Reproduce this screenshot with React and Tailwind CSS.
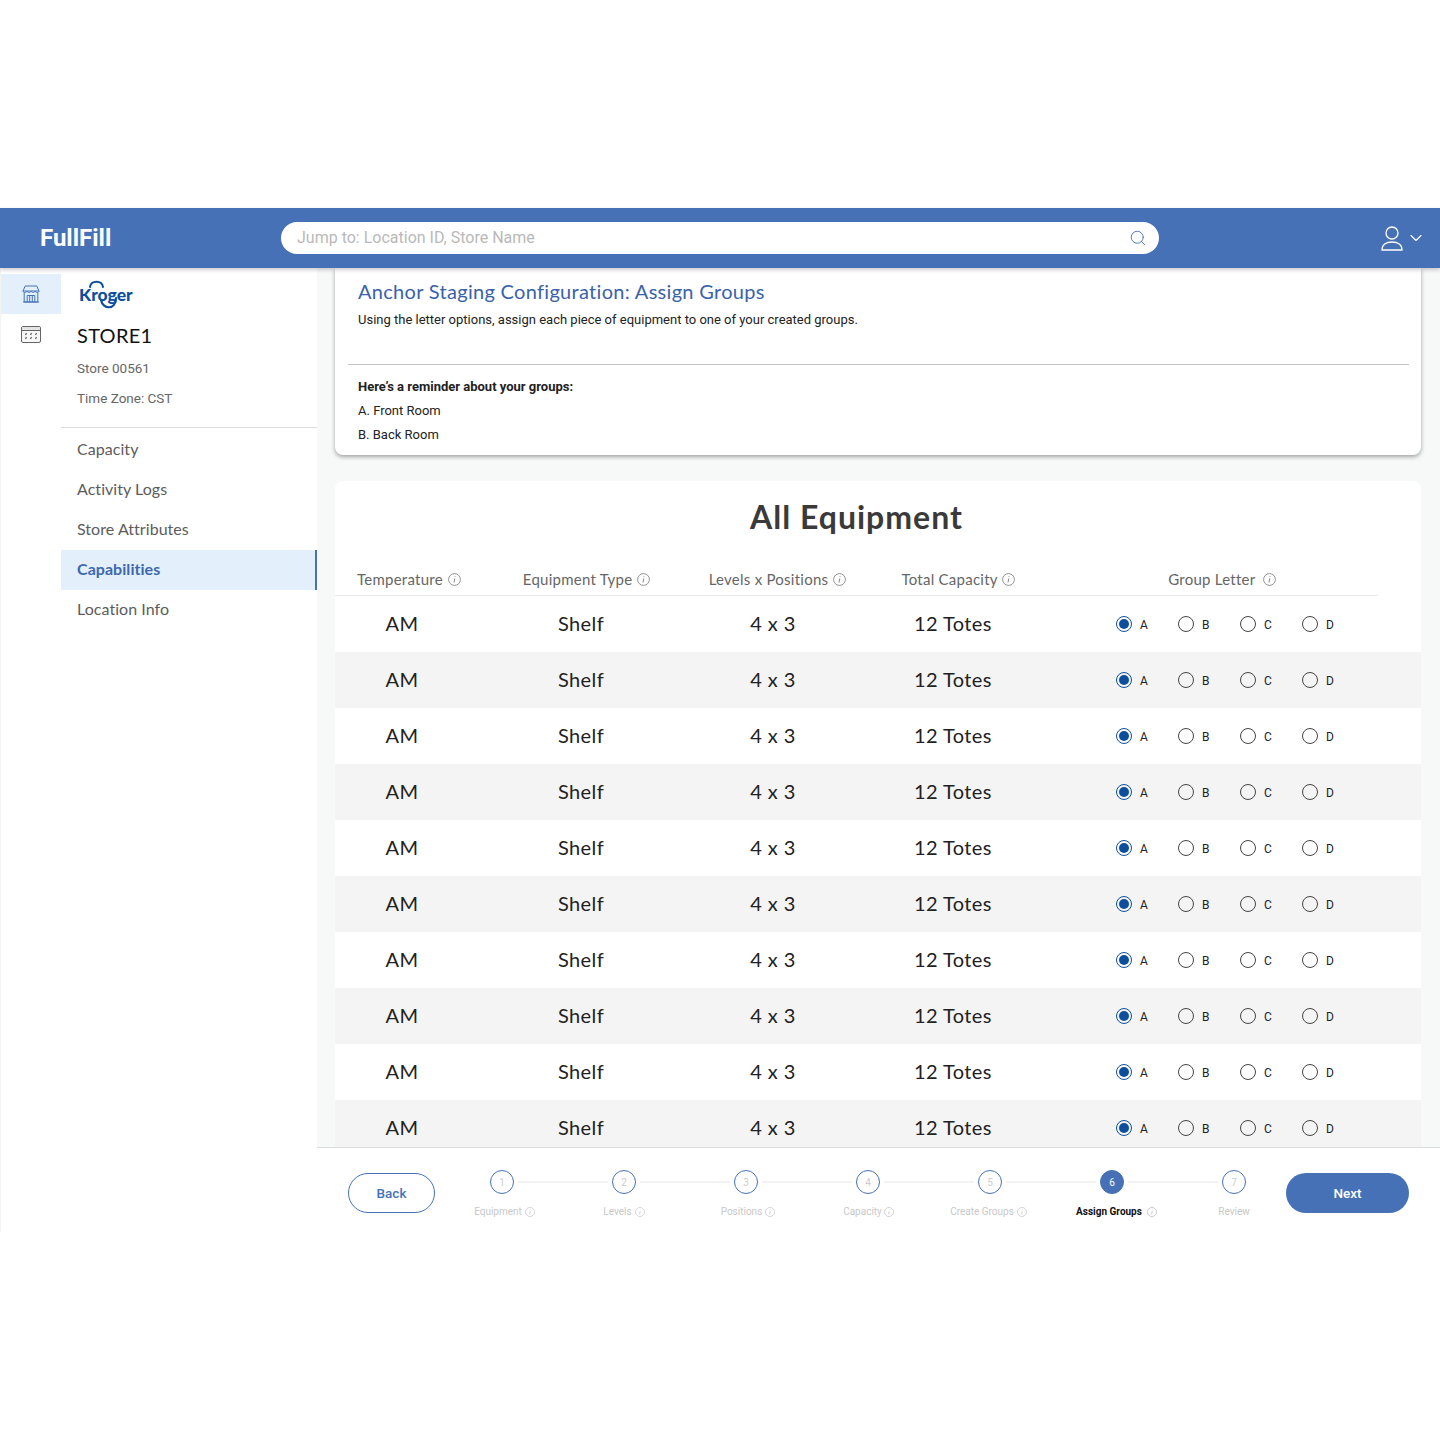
import React from 'react';
import { Search, ChevronDown } from 'lucide-react';

const NUNITO = "font-['Lato','Noto_Sans',sans-serif]";
const ROBOTO = "font-['Roboto',sans-serif]";

const MENU = ['Capacity', 'Activity Logs', 'Store Attributes', 'Capabilities', 'Location Info'];
const STEPS = [
  { n: 1, label: 'Equipment', info: true, shift: 'ml-[5px] gap-[3px]' },
  { n: 2, label: 'Levels', info: true, shift: 'gap-[3px]' },
  { n: 3, label: 'Positions', info: true, shift: 'ml-[4px] gap-[3px]' },
  { n: 4, label: 'Capacity', info: true, shift: 'ml-px gap-[2px]' },
  { n: 5, label: 'Create Groups', info: true, shift: 'mr-[3px] gap-[3px]' },
  { n: 6, label: 'Assign Groups', info: true, active: true, shift: 'ml-[9px] gap-[5px]' },
  { n: 7, label: 'Review', info: false, shift: '' },
];
const COLUMNS = [
  { label: 'Temperature', width: 'w-[166px]', gap: 'gap-[5px]' },
  { label: 'Equipment Type', width: 'w-[186px]', gap: 'gap-[5px]' },
  { label: 'Levels x Positions', width: 'w-[193px]', gap: 'gap-[5px]' },
  { label: 'Total Capacity', width: 'w-[267px]', gap: 'gap-[4px]' },
  { label: 'Group Letter', width: 'w-[210px]', gap: 'gap-[8px]' },
];
const ROWS = Array.from({ length: 10 }, (_, i) => i);

const InfoIcon = ({ size = 13, color = '#777' }) => (
  <svg width={size} height={size} viewBox="0 0 13 13" fill="none" className="shrink-0">
    <circle cx="6.5" cy="6.5" r="5.9" stroke={color} strokeWidth="0.8" />
    <path d="M7 3.300v.7M6.800 5.500 6 9.500" stroke={color} strokeWidth="0.9" />
  </svg>
);

const StoreIcon = () => (
  <svg width="18" height="18" viewBox="0 0 18 18" fill="none" stroke="#4472b8" strokeWidth="1">
    <path d="M3.200 1h11.600l2.200 5H1L3.200 1Z" />
    <path d="M1 6c0 2 3.200 2 4 0 .8 2 3.200 2 4 0 .8 2 3.200 2 4 0 .8 2 4 2 4 0" />
    <path d="M2.200 8v9h13.600V8M1 17h16" />
    <path d="M5.200 17v-6.500h7.600V17M7.700 10.500V17M10.300 10.500V17" />
  </svg>
);

const CalendarIcon = () => (
  <svg width="20" height="17" viewBox="0 0 20 17" fill="none">
    <rect x="0.500" y="0.500" width="19" height="16" rx="1.500" fill="#f7f7f7" stroke="#666" />
    <path d="M1 1h18v3.500H1Z" fill="#e4e4e4" />
    <path d="M0.500 4.500h19" stroke="#666" />
    <path d="M5.500 7 4.500 9M10.500 7 9.500 9M15.500 7 14.500 9M5.500 11 4.500 13M10.500 11 9.500 13M15.500 11 14.500 13" stroke="#666" strokeWidth="1.300" />
  </svg>
);

const UserIcon = () => (
  <svg width="22" height="25" viewBox="0 0 22 25" fill="none" stroke="#fff" strokeWidth="1.300">
    <circle cx="11" cy="7" r="6" />
    <path d="M1 24c0-5 4-8 10-8s10 3 10 8H1Z" />
  </svg>
);

const KrogerLogo = () => (
  <div className="relative w-[54px] h-[32px]">
    <svg width="54" height="32" viewBox="0 0 54 32" fill="none" className="absolute left-0 top-0">
      <path d="M10 10C11 3 22 3 23 10" stroke="#0d4f9e" strokeWidth="2" strokeLinecap="round" />
      <path d="M21 23C23 33 36 33 36 21" stroke="#0d4f9e" strokeWidth="2.200" strokeLinecap="round" />
    </svg>
    <span className={`${NUNITO} absolute -left-px top-[8px] text-[17.500px] leading-[20px] font-black text-[#0d4f9e]`}>Kroger</span>
  </div>
);

const Radio = ({ label, checked }) => (
  <div className="w-[62px] flex items-center gap-2">
    {checked ? (
      <span className="w-4 h-4 rounded-full border border-[#0d4f9e] flex items-center justify-center">
        <span className="w-[10px] h-[10px] rounded-full bg-[#0d4f9e]" />
      </span>
    ) : (
      <span className="w-4 h-4 rounded-full border border-[#444]" />
    )}
    <span className={`${ROBOTO} pt-px text-xs text-[#222]`}>{label}</span>
  </div>
);

const Step = ({ step, first, last }) => (
  <div className="w-[122px] flex flex-col items-center">
    <div className="w-full h-6 flex items-center">
      <span className={`flex-1 h-0.5 mr-[4px] ${first ? '' : 'bg-[#f3f3f3]'}`} />
      <span
        className={`${ROBOTO} w-6 h-6 rounded-full border text-[10px] flex items-center justify-center ${
          step.active ? 'bg-[#4671b7] border-[#4671b7] text-white' : 'border-[#4671b7] bg-white text-[#ccc]'
        }`}
      >
        {step.n}
      </span>
      <span className={`flex-1 h-0.5 ml-[4px] ${last ? '' : 'bg-[#f3f3f3]'}`} />
    </div>
    <div className={`${ROBOTO} ${step.shift} mt-[11px] h-[13px] flex items-center text-[10px] ${step.active ? 'font-bold text-[#111]' : 'text-[#c8c8c8]'}`}>
      <span className="whitespace-nowrap">{step.label}</span>
      {step.info && <InfoIcon size={10} color={step.active ? '#aaa' : '#bbb'} />}
    </div>
  </div>
);

export default function App() {
  return (
    <div className="w-[1440px] h-[1440px] bg-white pt-[208px] flex flex-col overflow-hidden">
      {/* top bar */}
      <header className="relative z-10 h-[60px] shrink-0 bg-[#4671b7] shadow-[0_2px_4px_rgba(0,0,0,0.2)] flex items-center pl-10 pr-[14px]">
        <div className={`${ROBOTO} w-[241px] text-2xl font-bold text-white`}>FullFill</div>
        <div className="w-[878px] h-8 rounded-full bg-white flex items-center justify-between pl-4 pr-[12px]">
          <span className={`${ROBOTO} text-base text-[#b9b9b9]`}>Jump to: Location ID, Store Name</span>
          <Search size={18} strokeWidth={1.200} color="#4671b7" />
        </div>
        <div className="ml-auto flex items-center gap-[3px]">
          <UserIcon />
          <ChevronDown size={20} color="#fff" strokeWidth={1.300} />
        </div>
      </header>

      <div className="h-[879px] shrink-0 flex">
        {/* left sidebar */}
        <aside className="w-[317px] shrink-0 flex bg-white border-l border-[#f3f3f3]">
          <div className="w-[60px] pt-[6px] flex flex-col items-center">
            <div className="w-[60px] h-10 bg-[#e3f0fb] flex items-center justify-center">
              <StoreIcon />
            </div>
            <div className="mt-[12px]">
              <CalendarIcon />
            </div>
          </div>
          <div className="flex-1 pt-[9px]">
            <div className="pl-[19px]">
              <KrogerLogo />
            </div>
            <div className="px-4">
              <div className={`${NUNITO} mt-[12px] text-xl leading-7 tracking-[0.3px] text-[#111]`}>STORE1</div>
              <div className={`${ROBOTO} mt-[9px] text-[13.500px] leading-[20px] text-[#666]`}>Store 00561</div>
              <div className={`${ROBOTO} mt-[10px] text-[13.500px] leading-[20px] text-[#666]`}>Time Zone: CST</div>
            </div>
            <div className="mt-[19px] border-t border-[#dcdcdc]" />
            <nav className="mt-[2px]">
              {MENU.map((item) => (
                <div
                  key={item}
                  className={`${NUNITO} h-10 pl-4 pb-0.5 flex items-center text-base tracking-[0.05px] ${
                    item === 'Capabilities'
                      ? 'bg-[#e3f0fb] border-r-2 border-[#4671b7] font-bold text-[#3d68ad]'
                      : 'text-[#5c5c5c]'
                  }`}
                >
                  {item}
                </div>
              ))}
            </nav>
          </div>
        </aside>

        {/* main panel */}
        <main className="flex-1 overflow-hidden bg-[#f7f9f9] pl-[18px] pr-[19px]">
          <section className="h-[187px] bg-white rounded-b-lg shadow-[0_2px_4px_rgba(0,0,0,0.35)] pt-[11px] pl-[13px] pr-[12px]">
            <div className="px-[10px]">
              <h1 className={`${NUNITO} text-xl leading-6 tracking-[0.3px] text-[#3a62a8]`}>Anchor Staging Configuration: Assign Groups</h1>
              <p className={`${ROBOTO} mt-[7px] text-[13px] leading-5 text-[#222]`}>Using the letter options, assign each piece of equipment to one of your created groups.</p>
            </div>
            <div className="mt-[34px] border-t border-[#c4c4c4]" />
            <div className={`${ROBOTO} px-[10px] pt-[10px] text-[13px] leading-6 text-[#222]`}>
              <div className="font-bold">Here’s a reminder about your groups:</div>
              <div>A. Front Room</div>
              <div>B. Back Room</div>
            </div>
          </section>

          <section className="mt-[26px] bg-white rounded-t-lg">
            <h2 className={`${NUNITO} mr-[43px] pt-[14px] text-center text-[32px] leading-11 font-bold tracking-[1px] text-[#3a3a3a]`}>All Equipment</h2>
            <div className="mt-[27px] mr-[43px] h-[30px] pb-[3px] pl-[22px] border-b border-[#e8e8e8] flex items-center">
              {COLUMNS.map((col) => (
                <div key={col.label} className={`${col.width} ${col.gap} flex items-center`}>
                  <span className={`${NUNITO} text-[15px] tracking-[0.25px] text-[#666]`}>{col.label}</span>
                  <InfoIcon size={13} color="#777" />
                </div>
              ))}
            </div>
            {ROWS.map((row) => (
              <div key={row} className={`h-14 flex items-center text-xl tracking-[0.4px] text-[#222] ${NUNITO} ${row % 2 === 1 ? 'bg-[#f4f4f4]' : 'bg-white'}`}>
                <div className="w-[134px] pb-0.5 text-center">AM</div>
                <div className="w-[224px] pb-0.5 text-center">Shelf</div>
                <div className="w-[160px] pb-0.5 text-center">4 x 3</div>
                <div className="w-[200px] pb-0.5 text-center">12 Totes</div>
                <div className="ml-[63px] flex tracking-normal">
                  <Radio label="A" checked />
                  <Radio label="B" />
                  <Radio label="C" />
                  <Radio label="D" />
                </div>
              </div>
            ))}
          </section>
        </main>
      </div>

      {/* wizard footer */}
      <div className="h-[85px] shrink-0 flex">
        <div className="w-[317px] shrink-0 bg-white border-l border-[#f3f3f3]" />
        <footer className="relative flex-1 bg-white border-t border-[#dcdcdc] pl-[31px] pt-[25px] flex items-start">
          <button className={`${ROBOTO} w-[87px] h-10 rounded-full border border-[#4671b7] text-[13.500px] font-medium text-[#4671b7] bg-white`}>Back</button>
          <div className="ml-[6px] -mt-[3px] flex">
            {STEPS.map((step, i) => (
              <Step key={step.n} step={step} first={i === 0} last={i === STEPS.length - 1} />
            ))}
          </div>
          <button className={`${ROBOTO} relative -ml-[9px] w-[123px] h-10 rounded-full bg-[#4671b7] text-[13.500px] font-medium text-white`}>Next</button>
        </footer>
      </div>
    </div>
  );
}
